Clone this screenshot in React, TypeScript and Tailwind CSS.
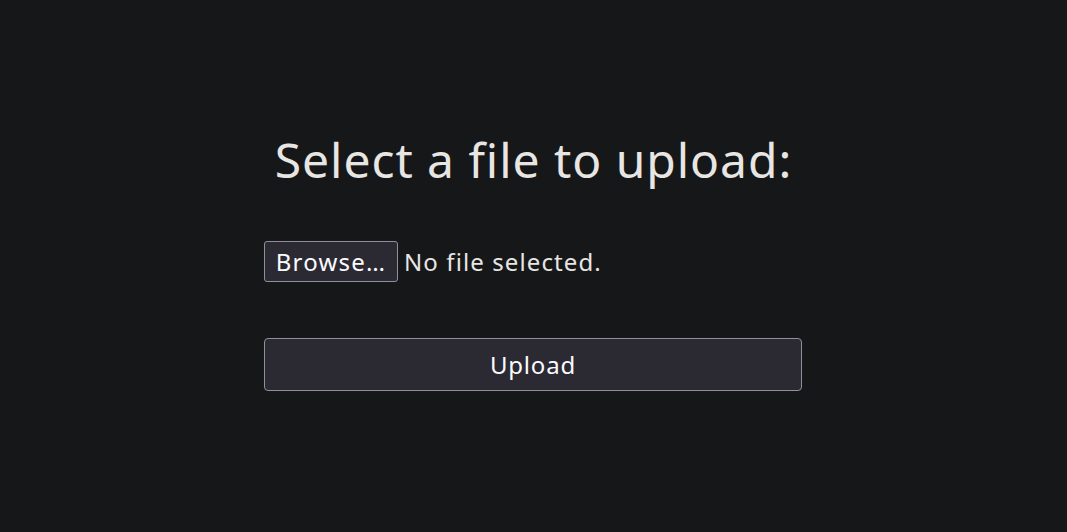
export default function App() {
  return (
    <div className="flex min-h-[532px] w-full flex-col items-center bg-[#161719] font-['Noto_Sans',sans-serif] text-[#e8e6e3]">
      <h1 className="mt-[124px] text-[48px] leading-[72px] font-normal tracking-[0.95px]">Select a file to upload:</h1>
      <form className="mt-[45px] mr-[1px] flex w-[538px] flex-col">
        <div className="flex items-center gap-[6px]">
          <button
            type="button"
            className="h-[41px] w-[134px] rounded-[3px] border border-[#8f8f9d] bg-[#2b2a33] text-[24px] leading-[32px] tracking-[1.2px] text-[#fbfbfe]"
          >
            Browse…
          </button>
          <span className="text-[24px] leading-[32px] tracking-[1.1px]">No file selected.</span>
        </div>
        <button
          type="button"
          className="mt-[56px] h-[53px] w-full rounded-[4px] border border-[#8f8f9d] bg-[#2b2a33] text-[24px] leading-[32px] tracking-[0.8px] text-[#fbfbfe]"
        >
          Upload
        </button>
      </form>
    </div>
  );
}
